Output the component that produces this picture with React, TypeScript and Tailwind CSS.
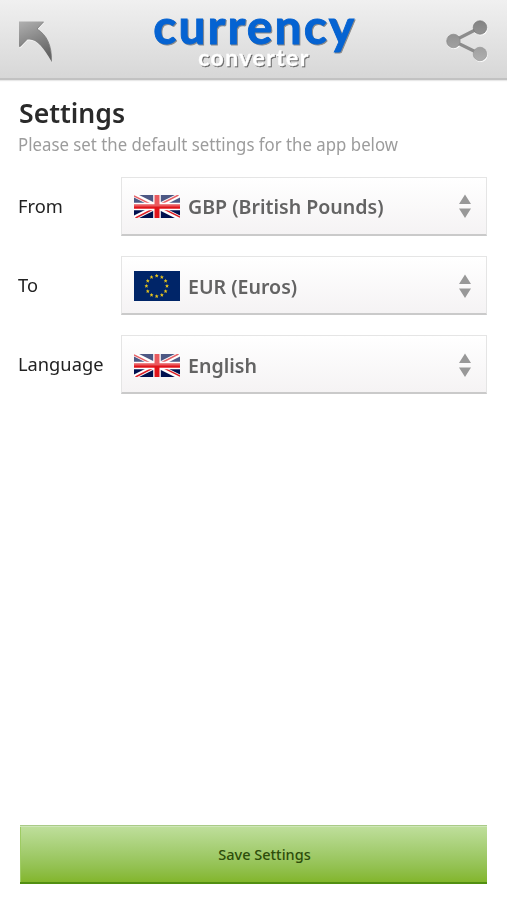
import React from "react";

function BackArrow() {
    return (
        <svg className="w-10 h-12" viewBox="15 18 40 48">
            <defs>
                <linearGradient id="arrow" x1="0" y1="0" x2="0.35" y2="1">
                    <stop offset="0" stopColor="#b0b0b0" />
                    <stop offset="1" stopColor="#646464" />
                </linearGradient>
            </defs>
            <path d="M19 21.5H44L37 29C47 35 52 46 51.5 61.5C43 47 35.5 37.5 26.5 40L20 47L19 46.5Z" fill="#f4f4f4" transform="translate(.6 .9)" />
            <path d="M19 21.5H44L37 29C47 35 52 46 51.5 61.5C43 47 35.5 37.5 26.5 40L20 47L19 46.5Z" fill="url(#arrow)" />
            <path d="M43.5 22L37 29C47 35 52 46 51.5 61.5M26.5 40L20 46.5" fill="none" stroke="#777" strokeWidth=".8" />
        </svg>
    );
}

function Logo() {
    return (
        <svg className="w-[220px] h-[78px] overflow-visible" viewBox="145 0 220 78" fontFamily="Lato, sans-serif" fontWeight="700">
            <text
                className="[filter:drop-shadow(1px_1px_0.5px_#888)]"
                x="152.2"
                y="43.5"
                fontSize="48"
                textLength="201"
                lengthAdjust="spacing"
                fill="#0563d2"
                stroke="#0563d2"
                strokeWidth=".9"
            >
                currency
            </text>
            <text
                className="[filter:drop-shadow(1px_1px_0.7px_#666)]"
                x="197.3"
                y="65.5"
                fontSize="23"
                textLength="110"
                lengthAdjust="spacing"
                fill="#fff"
                stroke="#fff"
                strokeWidth=".4"
            >
                converter
            </text>
        </svg>
    );
}

function ShareIcon() {
    return (
        <svg className="w-12 h-12" viewBox="443 17 48 48">
            <defs>
                <linearGradient id="share" gradientUnits="userSpaceOnUse" x1="0" y1="20" x2="0" y2="62">
                    <stop offset="0" stopColor="#828282" />
                    <stop offset="1" stopColor="#b0b0b0" />
                </linearGradient>
            </defs>
            <g transform="translate(.6 1.1)" fill="#fff">
                <circle cx="480" cy="27.5" r="7" />
                <circle cx="453.5" cy="41" r="7" />
                <circle cx="480" cy="54" r="7" />
            </g>
            <path d="M480 27.5L453.5 41L480 54" fill="none" stroke="#8c8c8c" strokeWidth="3.2" />
            <g fill="url(#share)" strokeWidth=".6">
                <circle cx="480" cy="27.5" r="6.8" stroke="#707070" />
                <circle cx="453.5" cy="41" r="6.8" stroke="#808080" />
                <circle cx="480" cy="54" r="6.8" stroke="#909090" />
            </g>
        </svg>
    );
}

function FlagUK() {
    return (
        <svg className="w-[46px] h-[23px]" viewBox="0 0 46 23">
            <rect width="46" height="23" fill="#00104f" />
            <path d="M0 0L46 23M46 0L0 23" stroke="#fff" strokeWidth="4.6" />
            <path d="M0 .8L18 9.8M46 22.2L28 13.2M44.5 0L27 9M1.5 23L19 14" stroke="#dc1f26" strokeWidth="1.5" />
            <path d="M23 0V23M0 11.5H46" stroke="#fff" strokeWidth="7.6" />
            <path d="M23 0V23" stroke="#e0141b" strokeWidth="5" />
            <path d="M0 11.5H46" stroke="#e0141b" strokeWidth="4.6" />
            <rect width="46" height="11.5" fill="#fff" opacity=".3" />
        </svg>
    );
}

function FlagEU() {
    const stars = Array.from({ length: 12 }, (_, i) => i * 30);
    return (
        <svg className="w-[46px] h-[30px]" viewBox="0 0 46 30">
            <rect width="46" height="30" fill="#002568" />
            {stars.map((deg) => {
                const a = (deg * Math.PI) / 180;
                return (
                    <path
                        key={deg}
                        transform={`translate(${22.7 + 10.3 * Math.sin(a)} ${15 - 10.3 * Math.cos(a)})`}
                        d="M0-2L.6-.7L1.9-.7L.9.3L1.3 1.8L0 1L-1.3 1.8L-.9.3L-1.9-.7L-.6-.7Z"
                        fill="#e8c51c"
                    />
                );
            })}
        </svg>
    );
}

function SelectRow({ label, flag, children }: { label: string; flag: React.ReactNode; children: React.ReactNode }) {
    return (
        <div className="group flex items-center h-[59px]">
            <div className="w-[103px] pb-0.5 text-[18px] leading-6 text-[#222]">
                <span className="inline-block origin-left scale-x-[1.015]">{label}</span>
            </div>
            <button className="flex items-center w-[366px] h-[59px] pl-3 pr-[15px] group-not-first:pt-0.5 border border-[#e5e5e5] border-b-2 border-b-[#cacaca] bg-linear-to-b from-white to-[#f5f3f4] text-left">
                <span className="w-[46px] shrink-0">{flag}</span>
                <span className="ml-2 flex-1 text-[20.5px] leading-7 font-semibold text-[#636363] whitespace-nowrap">
                    <span className="inline-block origin-left scale-x-[.955]">{children}</span>
                </span>
                <svg className="w-3 h-6" viewBox="0 0 12 24" fill="#989898">
                    <path d="M6 .5L12 10H0ZM0 14.5H12L6 24Z" />
                </svg>
            </button>
        </div>
    );
}

export default function App() {
    return (
        <div className="flex flex-col w-[507px] h-[900px] bg-white font-['Noto_Sans',sans-serif]">
            <header className="flex items-start justify-between h-20 pl-[15px] pr-4 bg-linear-to-b from-[#f0f0f0] to-[#d7d7d7] border-b-2 border-[#c2c2c2] shadow-[0_1px_1px_#e8e8e8]">
                <div className="pt-[18px]"><BackArrow /></div>
                <div className="ml-[13px]"><Logo /></div>
                <div className="pt-[17px]"><ShareIcon /></div>
            </header>
            <main className="flex flex-col flex-1 pl-[18px] pr-5 pb-4">
                <h1 className="mt-[15px] mb-px pl-px text-[27px] leading-9 font-semibold text-[#2a2a2a]">
                    <span className="inline-block origin-left scale-x-[.985]">Settings</span>
                </h1>
                <p className="text-[17.5px] leading-6 text-[#9c9c9c] whitespace-nowrap">
                    <span className="inline-block origin-left scale-x-[.96]">Please set the default settings for the app below</span>
                </p>
                <div className="flex flex-col gap-5 mt-[21px]">
                    <SelectRow label="From" flag={<FlagUK />}>GBP (British Pounds)</SelectRow>
                    <SelectRow label="To" flag={<FlagEU />}>EUR (Euros)</SelectRow>
                    <SelectRow label="Language" flag={<FlagUK />}>English</SelectRow>
                </div>
                <button className="mt-auto ml-0.5 w-[467px] h-[59px] pl-[22px] pt-0.5 border-t border-t-[#a9cb87] border-b-2 border-b-[#528f12] bg-linear-to-b from-[#bfdf9c] to-[#83b62b] shadow-[inset_0_1px_0_#cfe6b8,inset_1px_0_0_#9ecb63] text-[14.5px] font-medium text-[#2d4d0a]">
                    <span className="inline-block">Save Settings</span>
                </button>
            </main>
        </div>
    );
}
